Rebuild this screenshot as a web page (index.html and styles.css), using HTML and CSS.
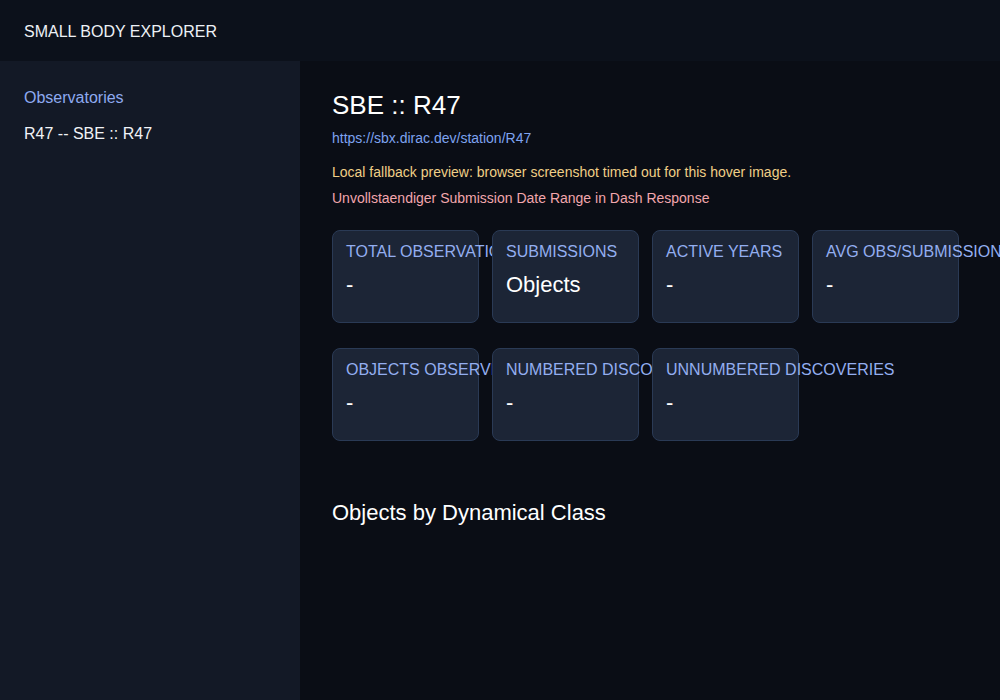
FILE: index.html
```html
<!DOCTYPE html>
<html lang="en">
<head>
    <meta charset="UTF-8">
    <meta name="viewport" content="width=device-width, initial-scale=1.0">
    <title>Small Body Explorer - SBE :: R47</title>
    <link rel="stylesheet" href="styles.css">
</head>
<body>

    <header class="topbar">SMALL BODY EXPLORER</header>

    <div class="layout">
        <aside class="sidebar">
            <div class="side-title">Observatories</div>
            <div class="side-item">R47 -- SBE :: R47</div>
        </aside>

        <main class="content">
            <h1 class="page-title">SBE :: R47</h1>
            <a class="station-link" href="#">https://sbx.dirac.dev/station/R47</a>
            <p class="note warn">Local fallback preview: browser screenshot timed out for this hover image.</p>
            <p class="note error">Unvollstaendiger Submission Date Range in Dash Response</p>

            <div class="stats">
                <div class="card">
                    <div class="label">TOTAL OBSERVATIONS</div>
                    <div class="value">-</div>
                </div>
                <div class="card">
                    <div class="label">SUBMISSIONS</div>
                    <div class="value">Objects</div>
                </div>
                <div class="card">
                    <div class="label">ACTIVE YEARS</div>
                    <div class="value">-</div>
                </div>
                <div class="card">
                    <div class="label">AVG OBS/SUBMISSIONS</div>
                    <div class="value">-</div>
                </div>
            </div>

            <div class="stats">
                <div class="card">
                    <div class="label">OBJECTS OBSERVED</div>
                    <div class="value">-</div>
                </div>
                <div class="card">
                    <div class="label">NUMBERED DISCOVERIES</div>
                    <div class="value">-</div>
                </div>
                <div class="card">
                    <div class="label">UNNUMBERED DISCOVERIES</div>
                    <div class="value">-</div>
                </div>
            </div>

            <h2 class="section-title">Objects by Dynamical Class</h2>
        </main>
    </div>

</body>
</html>
```

FILE: styles.css
```css
html, body {
    margin: 0;
    height: 100%;
}

body {
    font-family: "Liberation Sans", Arial, sans-serif;
    background-color: #0a0d15;
    color: #f1f3f7;
    overflow: hidden;
}

.topbar {
    height: 61px;
    box-sizing: border-box;
    padding: 2px 24px 0;
    display: flex;
    align-items: center;
    background-color: #0c111b;
    font-size: 16px;
    color: #eef1f6;
}

.layout {
    display: flex;
    height: calc(100% - 61px);
}

.sidebar {
    width: 300px;
    flex-shrink: 0;
    box-sizing: border-box;
    padding: 27px 24px;
    background-color: #131926;
}

.side-title {
    font-size: 16px;
    line-height: 20px;
    color: #8eaaf0;
}

.side-item {
    margin-top: 16px;
    font-size: 16px;
    line-height: 20px;
    color: #f1f3f7;
}

.content {
    flex: 1;
    min-width: 0;
    padding: 28px 32px;
}

.page-title {
    margin: 0;
    font-size: 26px;
    line-height: 32px;
    font-weight: normal;
    color: #ffffff;
}

.station-link {
    display: block;
    margin-top: 7px;
    font-size: 14px;
    line-height: 20px;
    color: #7ea3f0;
    text-decoration: none;
}

.note {
    margin: 0;
    font-size: 14px;
    line-height: 20px;
}

.warn {
    margin-top: 14px;
    color: #f0cf87;
}

.error {
    margin-top: 6px;
    color: #f2a6ad;
}

.stats {
    display: flex;
    gap: 13px;
    margin-top: 22px;
}

.stats + .stats {
    margin-top: 25px;
}

.card {
    width: 147px;
    height: 93px;
    box-sizing: border-box;
    padding: 11px 13px;
    background-color: #1c2536;
    border: 1px solid #2a3a55;
    border-radius: 8px;
    white-space: nowrap;
}

.label {
    font-size: 16px;
    line-height: 20px;
    color: #93aef0;
}

.value {
    margin-top: 10px;
    font-size: 22px;
    line-height: 26px;
    color: #ffffff;
}

.section-title {
    margin: 58px 0 0;
    font-size: 22px;
    line-height: 28px;
    font-weight: normal;
    color: #ffffff;
}
```
